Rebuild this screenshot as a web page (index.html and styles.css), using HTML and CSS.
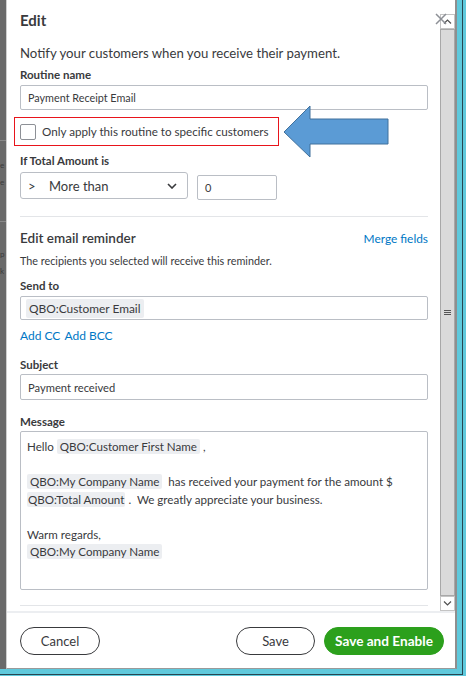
FILE: index.html
```html
<!DOCTYPE html>
<html>
<head>
<meta charset="utf-8">
<title>Edit routine</title>
<link rel="stylesheet" href="styles.css">
</head>
<body>
<div class="frame">
  <div class="desk">
    <div class="strip">
      <span class="strip-band b1"></span>
      <span class="strip-txt first">e</span>
      <span class="strip-txt">e</span>
      <span class="strip-band b2"></span>
      <span class="strip-txt gap">p</span>
      <span class="strip-txt">k</span>
    </div>
    <div class="modal">
      <div class="modal-body">
        <div class="content">
          <div class="title">Edit</div>
          <p class="intro">Notify your customers when you receive their payment.</p>
          <div class="label">Routine name</div>
          <div class="input">Payment Receipt Email</div>
          <div class="annot">
            <span class="checkbox"></span>
            <span class="check-label">Only apply this routine to specific customers</span>
          </div>
          <div class="label label-if">If Total Amount is</div>
          <div class="cond-row">
            <div class="select">
              <span class="op">&gt;</span>
              <span class="sel-text">More than</span>
              <svg class="chev" width="10" height="6" viewBox="0 0 10 6"><path d="M1 1 L5 5 L9 1" fill="none" stroke="#393a3d" stroke-width="1.6"/></svg>
            </div>
            <div class="num">0</div>
          </div>
          <div class="divider"></div>
          <div class="section-head">
            <span class="section-title">Edit email reminder</span>
            <a class="link">Merge fields</a>
          </div>
          <p class="hint">The recipients you selected will receive this reminder.</p>
          <div class="label label-send">Send to</div>
          <div class="input input-chips"><span class="chip">QBO:Customer Email</span></div>
          <div class="links"><a class="link">Add CC</a> <a class="link">Add BCC</a></div>
          <div class="label label-subject">Subject</div>
          <div class="input input-subject">Payment received</div>
          <div class="label label-msg">Message</div>
          <div class="textarea">
            <div class="line">Hello <span class="chip">QBO:Customer First Name</span> ,</div>
            <div class="line">&nbsp;</div>
            <div class="line"><span class="chip">QBO:My Company Name</span>&nbsp; has received your payment for the amount $</div>
            <div class="line"><span class="chip chip-tight">QBO:Total Amount</span> .&nbsp; We greatly appreciate your business.</div>
            <div class="line">&nbsp;</div>
            <div class="line">Warm regards,</div>
            <div class="line"><span class="chip">QBO:My Company Name</span></div>
          </div>
          <div class="divider divider-bottom"></div>
        </div>
        <div class="scrollbar">
          <div class="sb-btn">
            <svg width="9" height="5" viewBox="0 0 9 5"><path d="M1 4.5 L4.5 1 L8 4.5" fill="none" stroke="#505050" stroke-width="1.2"/></svg>
          </div>
          <div class="sb-thumb">
            <span class="grip"></span><span class="grip"></span><span class="grip"></span>
          </div>
          <div class="sb-btn">
            <svg width="9" height="5" viewBox="0 0 9 5"><path d="M1 0.5 L4.5 4 L8 0.5" fill="none" stroke="#505050" stroke-width="1.2"/></svg>
          </div>
        </div>
      </div>
      <div class="footer">
        <button class="btn btn-cancel">Cancel</button>
        <span class="spacer"></span>
        <button class="btn btn-save">Save</button>
        <button class="btn btn-primary">Save and Enable</button>
      </div>
      <button class="close" aria-label="Close">
        <svg width="12" height="12" viewBox="0 0 12 12"><path d="M1 1 L11 11 M11 1 L1 11" stroke="#8d9096" stroke-width="1.5"/></svg>
      </button>
    </div>
    <svg class="arrow" width="107" height="54" viewBox="0 0 107 54">
      <polygon points="1,27 27,1 27,14 105,14 105,39 27,39 27,52" fill="#5b9bd5" stroke="#41719c" stroke-width="1"/>
    </svg>
  </div>
</div>
</body>
</html>
```

FILE: styles.css
```css
* { box-sizing: border-box; }
html, body { margin: 0; padding: 0; }
body {
  width: 466px;
  height: 676px;
  overflow: hidden;
  background: #5fc9dc;
  font-family: Lato, "Noto Sans", sans-serif;
  color: #393a3d;
}
.frame {
  width: 463px;
  height: 675px;
  border-right: 1px solid #274651;
  border-bottom: 1px solid #274651;
}
.desk {
  position: relative;
  width: 457px;
  height: 669px;
  background: #6a6a6a;
  display: flex;
}
.strip {
  width: 6px;
  flex: none;
  display: flex;
  flex-direction: column;
  font-size: 8px;
  color: #3a3a3a;
  padding-top: 140px;
}
.strip-band { display: block; height: 1px; background: #8a8a8a; }
.strip-band.b2 { margin-top: 30px; }
.strip-txt { display: block; height: 17px; line-height: 17px; }
.strip-txt.first { margin-top: 16px; }
.strip-txt.gap { margin-top: 24px; }

.modal {
  position: relative;
  width: 451px;
  height: 669px;
  background: #fff;
  border-left: 1px solid #cfcfcf;
  border-right: 2px solid #8f8f8f;
  border-bottom: 1px solid #9a9a9a;
  display: flex;
  flex-direction: column;
}
.modal-body {
  height: 611px;
  display: flex;
  overflow: hidden;
}
.content {
  width: 433px;
  padding: 10px 12px 0 13px;
}
.title {
  font-size: 15px;
  font-weight: 700;
  line-height: 20px;
}
.intro {
  margin: 14px 0 0;
  font-size: 13.2px;
  line-height: 19px;
}
.label {
  margin-top: 5px;
  font-size: 11.5px;
  font-weight: 700;
  line-height: 14px;
}
.input {
  margin-top: 3px;
  height: 25px;
  border: 1px solid #babec5;
  border-radius: 2px;
  padding: 0 7px;
  display: flex;
  align-items: center;
  font-size: 10.8px;
}
.annot {
  margin: 7px 0 0 -6px;
  width: 265px;
  height: 29px;
  border: 1px solid #e8141b;
  padding-left: 5px;
  display: flex;
  align-items: center;
}
.checkbox {
  width: 16px;
  height: 16px;
  border: 1px solid #8d9096;
  border-radius: 2px;
  flex: none;
}
.check-label {
  margin-left: 6px;
  font-size: 11.65px;
}
.label-if { margin-top: 8px; }
.cond-row {
  margin-top: 4px;
  display: flex;
  align-items: flex-start;
  gap: 9px;
}
.select {
  width: 168px;
  height: 27px;
  border: 1px solid #babec5;
  border-radius: 3px;
  display: flex;
  align-items: center;
  padding: 0 10px 0 7px;
  font-size: 13px;
}
.op { width: 21px; }
.sel-text { flex: 1; }
.chev { display: block; }
.num {
  margin-top: 3px;
  width: 80px;
  height: 25px;
  border: 1px solid #babec5;
  border-radius: 2px;
  padding: 0 7px;
  display: flex;
  align-items: center;
  font-size: 11px;
}
.divider {
  margin-top: 16px;
  height: 1px;
  background: #e3e5e8;
}
.section-head {
  margin-top: 12px;
  height: 18px;
  display: flex;
  justify-content: space-between;
  align-items: center;
}
.section-title {
  font-size: 13.5px;
  font-weight: 600;
}
.link {
  color: #0077c5;
  font-size: 11.9px;
  cursor: pointer;
}
.hint {
  margin: 7px 0 0;
  font-size: 10.8px;
  line-height: 14px;
}
.label-send { margin-top: 11px; }
.input-chips { height: 24px; padding: 0 5px; }
.chip {
  background: #eceef1;
  border-radius: 2px;
  padding: 1px 3px;
}
.input-chips .chip { font-size: 11.9px; padding: 2px 3px; }
.links {
  margin-top: 7px;
  line-height: 14px;
}
.links .link { font-size: 12px; }
.label-subject { margin-top: 15px; }
.input-subject { margin-top: 2px; height: 26px; font-size: 11.2px; }
.label-msg { margin-top: 15px; }
.textarea {
  margin-top: 2px;
  height: 159px;
  border: 1px solid #babec5;
  border-radius: 2px;
  padding: 6px 6px 0;
  font-size: 11.6px;
  line-height: 17.5px;
}
.chip-tight { padding: 1px 1px; }
.divider-bottom { margin-top: 15px; }

.scrollbar {
  width: 15px;
  padding-top: 14px;
  display: flex;
  flex-direction: column;
}
.sb-btn {
  height: 15px;
  border: 1px solid #c4c4c4;
  display: flex;
  align-items: center;
  justify-content: center;
  background: #fff;
}
.sb-thumb {
  height: 567px;
  background: #dadada;
  border: 1px solid #a8a8a8;
  display: flex;
  flex-direction: column;
  align-items: center;
  justify-content: center;
  gap: 1px;
}
.grip { display: block; width: 7px; height: 1px; background: #555; }

.footer {
  height: 57px;
  border-top: 2px solid #eceef1;
  padding: 0 11px 0 13px;
  display: flex;
  align-items: center;
}
.spacer { flex: 1; }
.btn {
  height: 28px;
  border-radius: 14px;
  border: 1px solid #393a3d;
  background: #fff;
  font-family: inherit;
  font-size: 13px;
  color: #393a3d;
  padding: 0;
}
.btn-cancel { width: 80px; }
.btn-save { width: 79px; }
.btn-primary {
  width: 120px;
  margin-left: 9px;
  background: #2ca01c;
  border-color: #2ca01c;
  color: #fff;
  font-weight: 700;
  font-size: 13.6px;
}
.close {
  position: absolute;
  left: 428px;
  top: 13px;
  width: 12px;
  height: 12px;
  padding: 0;
  border: 0;
  background: transparent;
}
.close svg { display: block; }
.arrow {
  position: absolute;
  left: 283px;
  top: 105px;
}
```
